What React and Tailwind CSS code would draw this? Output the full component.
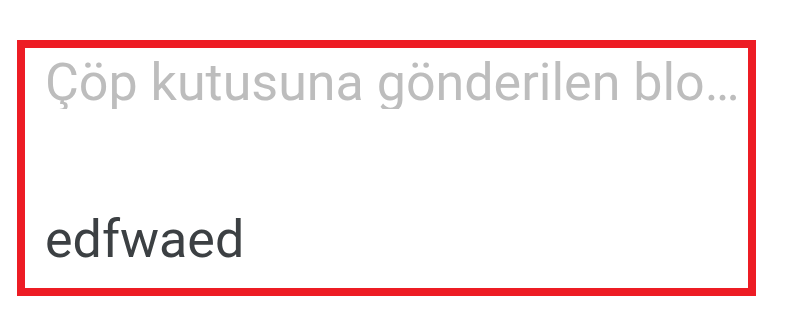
import React from 'react';

const App = () => {
  return (
    <div className="w-[810px] h-[333px] bg-white pt-[40px] pl-[17px]" style={{ fontFamily: 'Roboto, "Noto Sans", sans-serif' }}>
      <div className="w-[739px] h-[256px] border-8 border-[#ed1c24] flex flex-col justify-between pl-[20px] pr-[4px] pt-[9px] pb-[22px]">
        <div className="text-[52px] leading-none text-[#bdbdbd] truncate">
          Çöp kutusuna gönderilen bloklar
        </div>
        <div className="text-[52px] leading-none text-[#3c4043]">edfwaed</div>
      </div>
    </div>
  );
};

export default App;
